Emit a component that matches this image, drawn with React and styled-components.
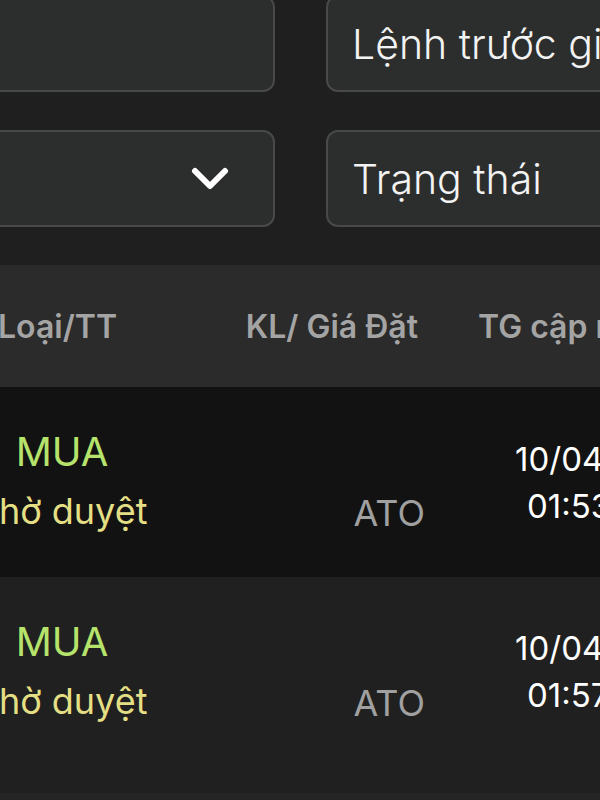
import React from "react";
import styled, { createGlobalStyle } from "styled-components";

const GlobalStyle = createGlobalStyle`
  html, body {
    margin: 0;
    padding: 0;
    background: #1e1f1e;
  }
  * {
    box-sizing: border-box;
  }
`;

const Screen = styled.div`
  width: 600px;
  height: 800px;
  overflow: hidden;
  background: #1e1f1e;
  font-family: Inter, "Liberation Sans", "Noto Sans", sans-serif;
`;

const Filters = styled.div`
  display: grid;
  grid-template-columns: 335px 335px;
  grid-auto-rows: 97px;
  column-gap: 51px;
  row-gap: 38px;
  margin: -5px 0 0 -60px;
`;

const Field = styled.div`
  display: flex;
  align-items: center;
  justify-content: ${({ $select }) => ($select ? "flex-end" : "flex-start")};
  padding: 0 43px 0 24px;
  background: #2c2e2d;
  border: 2px solid #484a49;
  border-radius: 12px;
  color: #f3f3f3;
  font-size: 41px;
  font-weight: 300;
  white-space: nowrap;
  overflow: hidden;
`;

const Chevron = () => (
  <svg width="40" height="26" viewBox="0 0 40 26" fill="none">
    <polyline
      points="5,5 20,20 35,5"
      stroke="#ffffff"
      strokeWidth="6"
      strokeLinecap="round"
      strokeLinejoin="round"
    />
  </svg>
);

const Table = styled.div`
  margin: 38px 0 0 -20px;
  width: 720px;
`;

const columns = "160px 281px 1fr";

const HeaderRow = styled.div`
  display: grid;
  grid-template-columns: ${columns};
  align-items: center;
  height: 122px;
  background: #2b2b2b;
  font-size: 32px;
  font-weight: 600;
  color: #a4a4a4;
  white-space: nowrap;
`;

const HeadCell = styled.div`
  text-align: ${({ $align }) => $align || "left"};
  padding-left: ${({ $pad }) => $pad || 0}px;
  padding-right: ${({ $padRight }) => $padRight || 0}px;
`;

const Row = styled.div`
  display: grid;
  grid-template-columns: ${columns};
  align-items: start;
  height: ${({ $height }) => $height}px;
  padding-top: 41px;
  background: ${({ $bg }) => $bg};
  white-space: nowrap;
`;

const SideCell = styled.div`
  display: flex;
  flex-direction: column;
  align-items: center;
  gap: 13px;
`;

const Side = styled.div`
  font-size: 40px;
  line-height: 48px;
  color: #b6e36c;
  padding-left: 4px;
`;

const Status = styled.div`
  font-size: 36px;
  line-height: 44px;
  color: #e4df84;
`;

const PriceCell = styled.div`
  display: flex;
  flex-direction: column;
  align-items: flex-end;
  gap: 13px;
  padding-top: 2px;
  margin-right: -4px;
`;

const Volume = styled.div`
  height: 48px;
  font-size: 36px;
  color: #d8d8d8;
`;

const Price = styled.div`
  font-size: 36px;
  line-height: 44px;
  color: #a0a0a0;
`;

const TimeCell = styled.div`
  display: flex;
  flex-direction: column;
  gap: 3px;
  padding: ${({ $top }) => $top}px 0 0 94px;
  font-size: 33px;
  line-height: 44px;
  color: #ffffff;
`;

const TimeLine = styled.div`
  padding-left: ${({ $indent }) => $indent || 0}px;
`;

const ListEnd = styled.div`
  height: 200px;
  background: #242524;
`;

const orders = [
  { side: "MUA", status: "Chờ duyệt", price: "ATO", date: "10/04/2024", time: "01:53:18", bg: "#121212", height: 190, top: 9 },
  { side: "MUA", status: "Chờ duyệt", price: "ATO", date: "10/04/2024", time: "01:57:42", bg: "#1f201f", height: 216, top: 8 },
];

export default function App() {
  return (
    <>
      <GlobalStyle />
      <Screen>
        <Filters>
          <Field />
          <Field>Lệnh trước giờ</Field>
          <Field $select>
            <Chevron />
          </Field>
          <Field>Trạng thái</Field>
        </Filters>

        <Table>
          <HeaderRow>
            <HeadCell $align="left" $pad={18}>Loại/TT</HeadCell>
            <HeadCell $align="right" $padRight={3}>KL/ Giá Đặt</HeadCell>
            <HeadCell $pad={57}>TG cập nhật</HeadCell>
          </HeaderRow>

          {orders.map((o, i) => (
            <Row key={i} $bg={o.bg} $height={o.height}>
              <SideCell>
                <Side>{o.side}</Side>
                <Status>{o.status}</Status>
              </SideCell>
              <PriceCell>
                <Volume />
                <Price>{o.price}</Price>
              </PriceCell>
              <TimeCell $top={o.top}>
                <TimeLine>{o.date}</TimeLine>
                <TimeLine $indent={12}>{o.time}</TimeLine>
              </TimeCell>
            </Row>
          ))}
          <ListEnd />
        </Table>
      </Screen>
    </>
  );
}
